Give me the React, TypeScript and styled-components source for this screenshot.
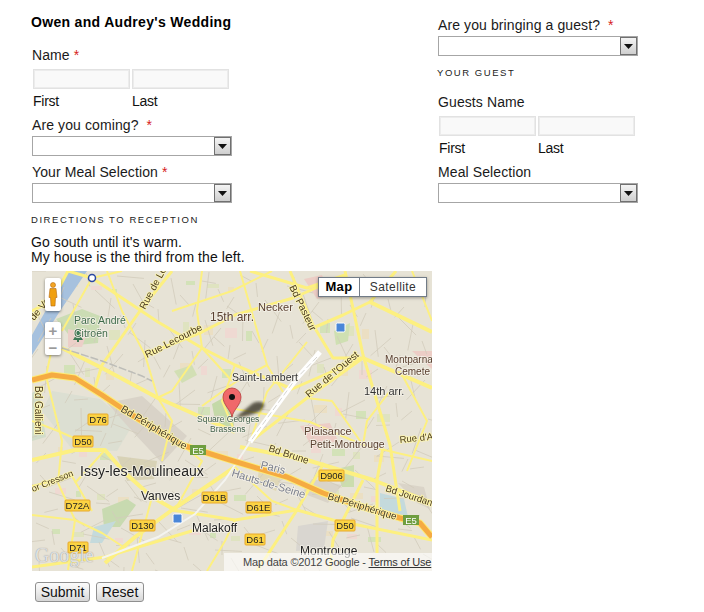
import React from 'react';
import styled, { createGlobalStyle } from 'styled-components';

const GlobalStyle = createGlobalStyle`
  html, body {
    margin: 0;
    padding: 0;
    background: #fff;
    color: #1a1a1a;
    font-family: "Liberation Sans", Arial, sans-serif;
    font-size: 14px;
  }
`;

const Page = styled.form`
  display: flex;
  width: 704px;
  height: 612px;
  box-sizing: border-box;
  padding-left: 31px;
  overflow: hidden;
`;

const LeftColumn = styled.div`
  width: 407px;
  padding-top: 14px;
`;

const RightColumn = styled.div`
  width: 220px;
  padding-top: 17px;
`;

const Title = styled.h1`
  margin: 0;
  font-size: 14px;
  line-height: 16px;
  font-weight: bold;
  color: #000;
  letter-spacing: 0.32px;
`;

const Label = styled.div<{ $top?: number; $left?: number }>`
  margin-top: ${p => p.$top ?? 0}px;
  margin-left: ${p => p.$left ?? 1}px;
  line-height: 16px;
  height: 16px;
  white-space: pre;
  letter-spacing: 0.1px;
`;

const Required = styled.span`
  color: #d62020;
`;

const NameInputs = styled.div<{ $left?: number }>`
  display: flex;
  gap: 2px;
  margin: 6px 0 0 ${p => p.$left ?? 2}px;
`;

const TextInput = styled.input`
  width: 97px;
  height: 20px;
  box-sizing: border-box;
  padding: 0;
  border: 1px solid #e2e2e2;
  outline: 1px solid #ececec;
  outline-offset: -2px;
  background: #f9f9f9;
`;

const SubLabels = styled.div<{ $left?: number }>`
  display: flex;
  gap: 2px;
  margin: 4px 0 0 ${p => p.$left ?? 2}px;
  line-height: 16px;
  height: 16px;
  font-size: 14px;
  color: #111;
`;

const SubLabel = styled.span`
  width: 97px;
  letter-spacing: -0.25px;
`;

const SelectBox = styled.div<{ $left?: number }>`
  display: flex;
  justify-content: flex-end;
  width: 200px;
  height: 20px;
  box-sizing: border-box;
  margin: 3px 0 0 ${p => p.$left ?? 1}px;
  border: 1px solid #a6a6a6;
  background: #fff;
`;

const SelectArrow = styled.div`
  display: flex;
  align-items: center;
  justify-content: center;
  width: 17px;
  box-sizing: border-box;
  border: 1px solid #707070;
  background: linear-gradient(#f4f4f4, #cfcfcf);
`;

const Caption = styled.div<{ $top: number; $left?: number }>`
  margin-top: ${p => p.$top}px;
  margin-left: ${p => p.$left ?? 0}px;
  font-size: 9.5px;
  line-height: 12px;
  height: 12px;
  letter-spacing: 1.55px;
  color: #222;
`;

const Directions = styled.p`
  margin: 9px 0 0;
  line-height: 15px;
  color: #111;
  letter-spacing: 0.08px;
`;

const MapFrame = styled.div`
  position: relative;
  width: 400px;
  height: 300px;
  margin: 6px 0 0 1px;
  overflow: hidden;
  background: #e7e3d6;
  font-family: "Liberation Sans", Arial, sans-serif;
`;

const MapSvg = styled.svg`
  display: block;
  filter: blur(0.35px);
`;

const MapTypes = styled.div`
  position: absolute;
  top: 6px;
  right: 5px;
  display: flex;
  height: 18px;
  background: #fff;
  border: 1px solid #717b87;
  box-shadow: 0 1px 3px rgba(0, 0, 0, 0.35);
`;

const MapType = styled.div<{ $active?: boolean }>`
  box-sizing: border-box;
  width: ${p => (p.$active ? 41 : 66)}px;
  text-align: center;
  line-height: 18px;
  font-size: ${p => (p.$active ? 13 : 12)}px;
  font-weight: ${p => (p.$active ? 'bold' : 'normal')};
  letter-spacing: 0.4px;
  color: ${p => (p.$active ? '#000' : '#333')};
  border-right: ${p => (p.$active ? '1px solid #717b87' : 'none')};
`;

const PegmanBox = styled.div`
  position: absolute;
  left: 13px;
  top: 7px;
  display: flex;
  align-items: center;
  justify-content: center;
  width: 16px;
  height: 33px;
  background: #fff;
  border-radius: 2px;
  box-shadow: 0 1px 3px rgba(0, 0, 0, 0.45);
`;

const ZoomBox = styled.div`
  position: absolute;
  left: 13px;
  top: 51px;
  display: flex;
  flex-direction: column;
  width: 16px;
  height: 33px;
  background: #fff;
  border-radius: 2px;
  box-shadow: 0 1px 3px rgba(0, 0, 0, 0.45);
`;

const ZoomButton = styled.div<{ $divider?: boolean }>`
  flex: 1;
  display: flex;
  align-items: center;
  justify-content: center;
  font-size: 15px;
  font-weight: bold;
  line-height: 15px;
  color: #9a9a9a;
  border-bottom: ${p => (p.$divider ? '1px solid #cfcfcf' : 'none')};
`;

const GoogleMark = styled.div`
  position: absolute;
  left: 3px;
  bottom: 5px;
  font-family: "Liberation Serif", serif;
  font-size: 20px;
  line-height: 22px;
  color: rgba(255, 255, 255, 0.75);
  text-shadow: 0 0 1px #777;
`;

const Attribution = styled.div`
  position: absolute;
  right: 0;
  bottom: 0;
  width: 208px;
  height: 18px;
  box-sizing: border-box;
  padding: 2px 0 0 19px;
  background: rgba(255, 255, 255, 0.62);
  font-size: 11px;
  line-height: 14px;
  letter-spacing: -0.17px;
  color: #444;
  white-space: nowrap;
`;

const TermsLink = styled.span`
  text-decoration: underline;
  color: #333;
`;

const Buttons = styled.div`
  display: flex;
  gap: 6px;
  margin: 11px 0 0 4px;
`;

const Button = styled.button<{ $width: number }>`
  width: ${p => p.$width}px;
  height: 20px;
  padding: 0;
  border: 1px solid #8f8f8f;
  border-radius: 3px;
  background: linear-gradient(#fbfbfb 0%, #ececec 50%, #d6d6d6 100%);
  font-family: inherit;
  font-size: 14px;
  line-height: 16px;
  color: #111;
`;

const Arrow = () => (
  <SelectArrow>
    <svg width="9" height="5" viewBox="0 0 9 5">
      <path d="M0 0h9L4.5 5z" fill="#111" />
    </svg>
  </SelectArrow>
);

const Req = ({ gap = ' ' }: { gap?: string }) => <Required>{gap}*</Required>;

type Road = { pts: string; w?: number };

const bigRoads: Road[] = [
  { pts: '60,7 126,51 170,77 203,94 260,118 331,87', w: 3 },
  { pts: '140,0 110,37 70,94 63,117', w: 3 },
  { pts: '30,77 70,97 126,127 203,161', w: 4 },
  { pts: '113,84 170,61 203,44 261,27 313,4', w: 3 },
  { pts: '258,0 281,54 301,87 331,87', w: 3 },
  { pts: '331,87 275,127 218,171', w: 3 },
  { pts: '313,0 331,84 358,174 368,240', w: 3 },
  { pts: '331,87 400,117', w: 4 },
  { pts: '338,31 400,61', w: 4 },
  { pts: '281,57 311,44 338,31 358,7 364,0', w: 3 },
  { pts: '218,0 275,17 313,4', w: 3 },
  { pts: '208,0 235,94 251,121', w: 2 },
  { pts: '275,71 235,121 218,171', w: 2 },
  { pts: '0,189 43,179 73,179 93,202 120,226 143,239', w: 4 },
  { pts: '0,244 43,249 70,262 90,275', w: 2 },
  { pts: '73,292 103,266 140,239 203,196', w: 4 },
  { pts: '140,239 203,249 265,239 301,249 400,269', w: 3 },
  { pts: '0,296 73,286 163,259', w: 3 },
  { pts: '26,212 43,249 36,299', w: 2 },
  { pts: '43,212 73,179', w: 2 },
  { pts: '208,176 275,189 341,209 400,232', w: 4 },
  { pts: '351,176 345,209 345,282', w: 3 },
  { pts: '331,209 301,269 298,299', w: 3 },
  { pts: '198,137 278,151 331,174 400,190', w: 2 },
  { pts: '0,40 20,30 36,0', w: 3 },
  { pts: '20,77 14,105 30,170 26,212', w: 2 },
  { pts: '75,0 90,40 113,84 126,127 140,150 130,190', w: 2 },
  { pts: '170,0 165,40 170,77 200,110', w: 2 },
  { pts: '225,300 265,239 292,192', w: 3 },
  { pts: '380,0 400,50', w: 2 },
  { pts: '368,100 395,150 375,200', w: 2 },
  { pts: '175,300 193,270 203,249', w: 2 },
  { pts: '120,226 100,300', w: 2 },
  { pts: '60,7 36,0', w: 3 },
  { pts: '90,0 60,7 30,60', w: 2 },
  { pts: '140,40 200,20 240,0', w: 2 },
  { pts: '170,77 140,120 125,127', w: 2 },
  { pts: '203,94 190,130 203,161', w: 2 },
  { pts: '235,94 205,110 170,135', w: 2 },
  { pts: '331,174 300,130 275,127', w: 2 },
  { pts: '358,120 335,150 331,174', w: 2 },
  { pts: '0,150 26,160 60,175', w: 2 },
  { pts: '143,239 170,190 150,174', w: 2 },
  { pts: '203,196 240,230 265,239', w: 2 },
  { pts: '0,215 40,205 60,240', w: 2 },
];

const areas = [
  { pts: '36,0 55,0 28,40 0,84 0,64', fill: '#a6c1de' },
  { pts: '24,48 50,38 68,45 66,72 45,74', fill: '#cbdcb4' },
  { pts: '36,58 55,62 50,76 36,76', fill: '#eccfc8' },
  { pts: '20,120 68,128 100,155 85,180 40,178 10,140', fill: '#dcdfd2' },
  { pts: '75,132 110,125 155,165 130,192 100,160', fill: '#d9d3c8' },
  { pts: '85,185 125,190 122,208 95,210', fill: '#d8d2b6' },
  { pts: '70,238 95,228 104,234 88,256 72,256', fill: '#c8dab0' },
  { pts: '142,100 160,94 165,104 150,112', fill: '#d2dfb4' },
  { pts: '180,133 200,122 202,156 184,154', fill: '#c4d9a8' },
  { pts: '268,155 298,152 306,170 280,176', fill: '#eccdc6' },
  { pts: '272,8 290,4 298,24 285,28', fill: '#eccdc6' },
  { pts: '380,80 400,80 400,98', fill: '#eccdc6' },
  { pts: '302,60 318,52 316,70 304,74', fill: '#cfe0b2' },
  { pts: '228,192 252,200 244,220 225,212', fill: '#e0d8b8' },
  { pts: '280,208 310,214 296,232 270,222', fill: '#dad4c8' },
  { pts: '348,222 372,228 376,246 348,238', fill: '#c4dadc' },
  { pts: '366,212 392,216 398,238 385,232', fill: '#dad4c8' },
  { pts: '304,198 322,194 322,216 310,216', fill: '#cbddae' },
  { pts: '266,255 296,250 292,278 264,280', fill: '#d9d6d0' },
  { pts: '62,256 84,250 70,272 58,272', fill: '#c4dadc' },
  { pts: '0,122 6,118 14,166 0,170', fill: '#d2ddca' },
];

const shields = [
  { x: 56, y: 143, w: 20, t: 'D76' },
  { x: 41, y: 165, w: 20, t: 'D50' },
  { x: 33, y: 229, w: 25, t: 'D72A' },
  { x: 98, y: 249, w: 25, t: 'D130' },
  { x: 36, y: 271, w: 20, t: 'D71' },
  { x: 170, y: 221, w: 25, t: 'D61B' },
  { x: 214, y: 231, w: 25, t: 'D61E' },
  { x: 213, y: 263, w: 20, t: 'D61' },
  { x: 287, y: 199, w: 25, t: 'D906' },
  { x: 303, y: 249, w: 20, t: 'D50' },
];

const greenShields = [
  { x: 158, y: 174 },
  { x: 371, y: 244 },
];

const labels = [
  { x: 42, y: 53, s: 10.5, t: 'Parc André', c: '#3f6b4a' },
  { x: 42, y: 66, s: 10.5, t: 'Citroën', c: '#3f6b4a' },
  { x: 178, y: 50, s: 12, t: '15th arr.', c: '#5a4030' },
  { x: 226, y: 40, s: 11, t: 'Necker', c: '#5a4030' },
  { x: 200, y: 110, s: 10.5, t: 'Saint-Lambert', c: '#333' },
  { x: 353, y: 92, s: 10, t: 'Montparna', c: '#5a4030' },
  { x: 363, y: 104, s: 10, t: 'Cemete', c: '#5a4030' },
  { x: 332, y: 124, s: 11, t: '14th arr.', c: '#333' },
  { x: 272, y: 164, s: 11, t: 'Plaisance', c: '#5a4030' },
  { x: 278, y: 177, s: 10.5, t: 'Petit-Montrouge', c: '#5a4030' },
  { x: 48, y: 205, s: 14, t: 'Issy-les-Moulineaux', c: '#222' },
  { x: 109, y: 229, s: 12, t: 'Vanves', c: '#222' },
  { x: 160, y: 261, s: 12, t: 'Malakoff', c: '#222' },
  { x: 268, y: 284, s: 12, t: 'Montrouge', c: '#222' },
  { x: 165, y: 151, s: 8.5, t: 'Square Georges', c: '#44624c' },
  { x: 178, y: 161, s: 8.5, t: 'Brassens', c: '#44624c' },
];

const roadLabels = [
  { x: 88, y: 140, r: 31, s: 10.5, t: 'Bd Périphérique' },
  { x: 295, y: 228, r: 17, s: 10, t: 'Bd Périphérique' },
  { x: 115, y: 87, r: -27, s: 10, t: 'Rue Lecourbe' },
  { x: 113, y: 39, r: -62, s: 10, t: 'Rue de Lo' },
  { x: 257, y: 16, r: 64, s: 10, t: 'Bd Pasteur' },
  { x: 277, y: 127, r: -40, s: 10, t: "Rue de l'Ouest" },
  { x: 236, y: 180, r: 18, s: 10, t: 'Bd Brune' },
  { x: 353, y: 220, r: 18, s: 9.5, t: 'Bd Jourdan' },
  { x: 1, y: 221, r: -22, s: 9, t: 'or Cresson' },
  { x: 3, y: 115, r: 90, s: 10, t: 'Bd Gallieni' },
  { x: 368, y: 172, r: -6, s: 9.5, t: "Rue d'A" },
  { x: 2, y: 50, r: -50, s: 10, t: 'de Va' },
];

// thin side streets, fixed pseudo random so the picture stays the same
const sideStreets = Array.from({ length: 280 }, (_, i) => {
  const x = (i * 97) % 400;
  const y = (i * 61) % 300;
  const a = (i * 37) % 180 * (Math.PI / 180);
  const l = 14 + ((i * 13) % 26);
  return `M${x} ${y}L${(x + Math.cos(a) * l).toFixed(1)} ${(y + Math.sin(a) * l).toFixed(1)}`;
}).join('');

const blocks = Array.from({ length: 70 }, (_, i) => ({
  x: (i * 131 + 17) % 390,
  y: (i * 83 + 9) % 290,
  w: 5 + (i * 7) % 9,
  h: 4 + (i * 5) % 7,
  fill: ['#dfe3c0', '#ebdfc3', '#efd9d2', '#d3e2b8'][i % 4],
}));

const RING = '0,109 20,104 43,107 70,124 100,144 133,164 150,174 198,189 255,206 291,222 331,236 368,247 388,252 400,266';

const MapDrawing = () => (
  <MapSvg width="400" height="300" viewBox="0 0 400 300">
    <defs>
      <filter id="soft">
        <feGaussianBlur stdDeviation="1.6" />
      </filter>
    </defs>
    <rect width="400" height="300" fill="#e7e3d6" />
    {blocks.map((b, i) => (
      <rect key={i} x={b.x} y={b.y} width={b.w} height={b.h} fill={b.fill} />
    ))}
    {areas.map((a, i) => (
      <polygon key={i} points={a.pts} fill={a.fill} />
    ))}
    <path d={sideStreets} stroke="#d2ccbb" strokeWidth="0.8" fill="none" />
    {bigRoads.map((r, i) => (
      <polyline key={i} points={r.pts} fill="none" stroke="#fdf080" strokeWidth={r.w ?? 2} strokeLinejoin="round" />
    ))}
    <polyline points="288,81 265,107 218,171" fill="none" stroke="#fff" strokeWidth="5" />
    <polyline points="285,86 262,110 218,171" fill="none" stroke="#c9c9c4" strokeWidth="0.8" strokeDasharray="6 3" />
    <polyline points="218,171 193,209 163,243 126,266 70,287" fill="none" stroke="#f4f4f0" strokeWidth="2" />
    <polyline points="30,77 70,90 110,105 120,110" fill="none" stroke="#bdbdb8" strokeWidth="1.5" strokeDasharray="8 2" />
    <polyline points={RING} fill="none" stroke="#fdec77" strokeWidth="7" strokeLinejoin="round" />
    <polyline points={RING} fill="none" stroke="#f5ab42" strokeWidth="5" strokeLinejoin="round" />
    <path d="M46 58l-4 6h2l-3 5h4v2h2v-2h4l-3-5h2z" fill="#3f7a55" />
    <g fontFamily="Liberation Sans, Arial, sans-serif">
      {shields.map((s, i) => (
        <g key={i}>
          <rect x={s.x} y={s.y} width={s.w} height="11" rx="1" fill="#fbd343" stroke="#e8a92c" />
          <text x={s.x + s.w / 2} y={s.y + 9} fontSize="9.5" textAnchor="middle" fill="#222">
            {s.t}
          </text>
        </g>
      ))}
      {greenShields.map((s, i) => (
        <g key={i}>
          <rect x={s.x} y={s.y} width="16" height="10" fill="#6f9e3f" />
          <text x={s.x + 8} y={s.y + 8.5} fontSize="9.5" textAnchor="middle" fill="#fff">
            E5
          </text>
        </g>
      ))}
      {labels.map((l, i) => (
        <text key={i} x={l.x} y={l.y} fontSize={l.s} fill={l.c} stroke="#f4f1e8" strokeWidth="1.6" paintOrder="stroke">
          {l.t}
        </text>
      ))}
      {roadLabels.map((l, i) => (
        <text
          key={i}
          transform={`translate(${l.x} ${l.y}) rotate(${l.r})`}
          fontSize={l.s}
          fill="#4a3a20"
          stroke="#fdf6b0"
          strokeWidth="1.6"
          paintOrder="stroke"
        >
          {l.t}
        </text>
      ))}
      <text transform="translate(228 197) rotate(14)" fontSize="11" fill="#7b7f8c" stroke="#f4f1e8" strokeWidth="1.6" paintOrder="stroke">
        Paris
      </text>
      <text transform="translate(199 205) rotate(17)" fontSize="11" fill="#7b7f8c" stroke="#f4f1e8" strokeWidth="1.6" paintOrder="stroke">
        Hauts-de-Seine
      </text>
    </g>
    <rect x="304" y="52" width="9" height="9" rx="1.5" fill="#4a86d8" stroke="#fff" />
    <rect x="141" y="243" width="9" height="9" rx="1.5" fill="#4a86d8" stroke="#fff" />
    <circle cx="60" cy="7" r="3.5" fill="#fff" stroke="#2a48a0" strokeWidth="1.5" />
    {/* marker shadow and pin */}
    <path d="M203 147l18-15c8-3 14 0 10 5-5 6-16 8-28 10z" fill="#2e2c1c" opacity="0.75" filter="url(#soft)" />
    <path d="M200 146c-1-7-9-12-9-20a9 9 0 0 1 18 0c0 8-8 13-9 20z" fill="#f0686a" stroke="#b53c3c" strokeWidth="0.8" />
    <circle cx="200" cy="126" r="3" fill="#111" />
  </MapSvg>
);

const WeddingMap = () => (
  <MapFrame>
    <MapDrawing />
    <MapTypes>
      <MapType $active>Map</MapType>
      <MapType>Satellite</MapType>
    </MapTypes>
    <PegmanBox>
      <svg width="10" height="25" viewBox="0 0 10 25">
        <circle cx="5" cy="3" r="2.5" fill="#f5a623" stroke="#b36a10" strokeWidth="0.6" />
        <path d="M2 6.5h6l1 9H7.5L7 24H3l-.5-8.5H1z" fill="#f0a010" stroke="#b36a10" strokeWidth="0.6" />
      </svg>
    </PegmanBox>
    <ZoomBox>
      <ZoomButton $divider>+</ZoomButton>
      <ZoomButton>−</ZoomButton>
    </ZoomBox>
    <GoogleMark>Google</GoogleMark>
    <Attribution>
      Map data ©2012 Google - <TermsLink>Terms of Use</TermsLink>
    </Attribution>
  </MapFrame>
);

export default function App() {
  return (
    <>
      <GlobalStyle />
      <Page onSubmit={e => e.preventDefault()}>
        <LeftColumn>
          <Title>Owen and Audrey's Wedding</Title>
          <Label $top={17}>
            Name <Req gap="" />
          </Label>
          <NameInputs>
            <TextInput />
            <TextInput />
          </NameInputs>
          <SubLabels>
            <SubLabel>First</SubLabel>
            <SubLabel>Last</SubLabel>
          </SubLabels>
          <Label $top={8}>
            Are you coming? <Req gap=" " />
          </Label>
          <SelectBox>
            <Arrow />
          </SelectBox>
          <Label $top={8}>
            Your Meal Selection <Req gap="" />
          </Label>
          <SelectBox>
            <Arrow />
          </SelectBox>
          <Caption $top={11}>DIRECTIONS TO RECEPTION</Caption>
          <Directions>
            Go south until it's warm.
            <br />
            My house is the third from the left.
          </Directions>
          <WeddingMap />
          <Buttons>
            <Button $width={55} type="submit">
              Submit
            </Button>
            <Button $width={48} type="reset">
              Reset
            </Button>
          </Buttons>
        </LeftColumn>
        <RightColumn>
          <Label $left={0}>
            Are you bringing a guest? <Req gap=" " />
          </Label>
          <SelectBox $left={0}>
            <Arrow />
          </SelectBox>
          <Caption $top={11} $left={-1}>
            YOUR GUEST
          </Caption>
          <Label $top={15} $left={0}>
            Guests Name
          </Label>
          <NameInputs $left={1}>
            <TextInput />
            <TextInput />
          </NameInputs>
          <SubLabels $left={1}>
            <SubLabel>First</SubLabel>
            <SubLabel>Last</SubLabel>
          </SubLabels>
          <Label $top={8} $left={0}>
            Meal Selection
          </Label>
          <SelectBox $left={0}>
            <Arrow />
          </SelectBox>
        </RightColumn>
      </Page>
    </>
  );
}
